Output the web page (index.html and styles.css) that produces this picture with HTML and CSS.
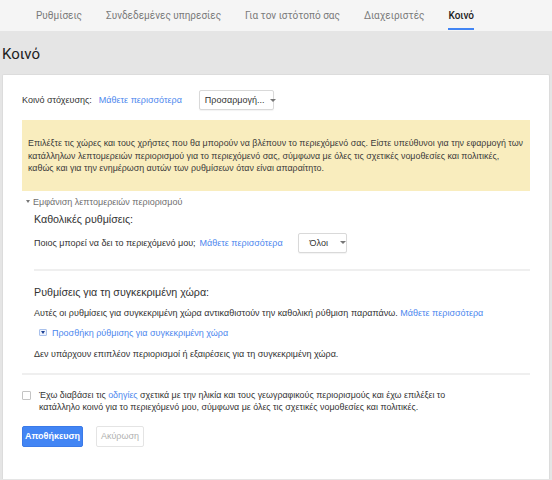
FILE: index.html
```html
<!DOCTYPE html>
<html lang="el">
<head>
<meta charset="utf-8">
<title>Κοινό</title>
<link rel="stylesheet" href="styles.css">
</head>
<body>
<nav class="tabs">
  <a class="tab">Ρυθμίσεις</a>
  <a class="tab">Συνδεδεμένες υπηρεσίες</a>
  <a class="tab">Για τον ιστότοπό σας</a>
  <a class="tab">Διαχειριστές</a>
  <a class="tab active">Κοινό</a>
</nav>
<main class="main">
  <h1 class="title">Κοινό</h1>
  <section class="card">
    <div class="row target-row">
      <span class="label">Κοινό στόχευσης:</span>
      <a class="link">Μάθετε περισσότερα</a>
      <button class="dropdown dd-custom"><span class="dd-text">Προσαρμογή...</span><span class="caret"></span></button>
    </div>
    <div class="notice">Επιλέξτε τις χώρες και τους χρήστες που θα μπορούν να βλέπουν το περιεχόμενό σας. Είστε υπεύθυνοι για την εφαρμογή των<br>κατάλληλων λεπτομερειών περιορισμού για το περιεχόμενό σας, σύμφωνα με όλες τις σχετικές νομοθεσίες και πολιτικές,<br>καθώς και για την ενημέρωση αυτών των ρυθμίσεων όταν είναι απαραίτητο.</div>
    <div class="toggle"><span class="toggle-caret"></span>Εμφάνιση λεπτομερειών περιορισμού</div>
    <div class="details">
      <h2 class="subhead">Καθολικές ρυθμίσεις:</h2>
      <div class="row who-row">
        <span class="label">Ποιος μπορεί να δει το περιεχόμενό μου;</span>
        <a class="link">Μάθετε περισσότερα</a>
        <button class="dropdown dd-all"><span class="dd-text">Όλοι</span><span class="caret"></span></button>
      </div>
      <hr class="sep">
      <h2 class="subhead subhead-country">Ρυθμίσεις για τη συγκεκριμένη χώρα:</h2>
      <p class="text text-override">Αυτές οι ρυθμίσεις για συγκεκριμένη χώρα αντικαθιστούν την καθολική ρύθμιση παραπάνω. <a class="link">Μάθετε περισσότερα</a></p>
      <a class="add-link"><span class="add-icon"><span class="add-caret"></span></span>Προσθήκη ρύθμισης για συγκεκριμένη χώρα</a>
      <p class="text text-none">Δεν υπάρχουν επιπλέον περιορισμοί ή εξαιρέσεις για τη συγκεκριμένη χώρα.</p>
    </div>
    <hr class="sep sep-full">
    <label class="agree">
      <span class="checkbox"></span>
      <span class="agree-text">Έχω διαβάσει τις <a class="link">οδηγίες</a> σχετικά με την ηλικία και τους γεωγραφικούς περιορισμούς και έχω επιλέξει το<br>κατάλληλο κοινό για το περιεχόμενό μου, σύμφωνα με όλες τις σχετικές νομοθεσίες και πολιτικές.</span>
    </label>
    <div class="actions">
      <button class="btn btn-primary">Αποθήκευση</button>
      <button class="btn btn-cancel">Ακύρωση</button>
    </div>
  </section>
</main>
</body>
</html>
```

FILE: styles.css
```css
* { box-sizing: border-box; }

html, body {
  margin: 0;
  padding: 0;
}

body {
  background: #e5e5e5;
  font-family: "Liberation Sans", Arial, sans-serif;
  font-size: 9px;
  color: #333;
  width: 552px;
  height: 480px;
  overflow: hidden;
}

.tabs {
  display: flex;
  gap: 24px;
  height: 31px;
  padding-left: 36px;
  background: #f5f5f5;
}

.tab {
  display: block;
  height: 30px;
  padding-top: 10px;
  font-family: Roboto, "Liberation Sans", sans-serif;
  font-size: 10px;
  line-height: 12px;
  color: #7a7a7a;
  border-bottom: 2px solid transparent;
}

.tab.active {
  color: #222;
  font-weight: 500;
  border-bottom-color: #4285f4;
}

.main {
  padding: 0 2px;
}

.title {
  margin: 0;
  padding-top: 14px;
  height: 43px;
  font-family: Roboto, "Liberation Sans", sans-serif;
  font-weight: 400;
  font-size: 15px;
  line-height: 18px;
  color: #212121;
}

.card {
  background: #fff;
  border: 1px solid #dcdcdc;
  border-bottom: none;
  border-radius: 2px 2px 0 0;
  padding: 15px 19px 32px;
}

.row {
  display: flex;
  align-items: center;
  height: 20px;
}

.label { color: #333; }

.link {
  color: #4d87ee;
  text-decoration: none;
}

.target-row .link { margin-left: 7px; }
.target-row .dropdown { margin-left: 17px; }

.who-row { margin-top: 7px; }
.who-row .link { margin-left: 4px; }
.who-row .dropdown { margin-left: 15px; }

.dropdown {
  display: flex;
  align-items: center;
  height: 20px;
  padding: 0 5px;
  background: #fff;
  border: 1px solid #d9d9d9;
  border-radius: 2px;
  box-shadow: 0 1px 1px rgba(0,0,0,0.05);
  font-family: "Liberation Sans", Arial, sans-serif;
  font-size: 9px;
  color: #333;
}

.dd-custom { width: 75px; }
.dd-custom .caret { margin-left: 5px; }

.dd-all { width: 49px; padding-left: 11px; }
.dd-all .caret { margin-left: 12px; }

.caret {
  width: 0;
  height: 0;
  border-left: 3px solid transparent;
  border-right: 3px solid transparent;
  border-top: 3px solid #777;
}

.notice {
  margin-top: 10px;
  padding: 17px 0 16px 6px;
  background: #f9edbe;
  font-size: 8.9px;
  line-height: 12.5px;
  white-space: nowrap;
  color: #3a3a3a;
}

.toggle {
  display: flex;
  align-items: center;
  margin-top: 5px;
  padding-left: 4px;
  line-height: 12px;
  color: #6f6f6f;
}

.toggle-caret {
  width: 0;
  height: 0;
  margin-right: 3px;
  border-left: 2.5px solid transparent;
  border-right: 2.5px solid transparent;
  border-top: 3px solid #777;
}

.details {
  padding-left: 12px;
}

.subhead {
  margin: 4px 0 0;
  font-weight: 400;
  font-size: 10.7px;
  line-height: 14px;
  color: #333;
}

.subhead-country { margin-top: 14px; }

.sep {
  margin: 16px 0 0;
  height: 2px;
  border: none;
  background: #efefef;
}

.sep-full { margin-top: 13px; }

.text {
  margin: 0;
  line-height: 12px;
}

.text-override { margin-top: 8px; }
.text-none { margin-top: 9px; }

.add-link {
  display: flex;
  align-items: center;
  margin-top: 8px;
  padding-left: 5px;
  line-height: 12px;
  color: #4d87ee;
}

.add-icon {
  display: flex;
  align-items: center;
  justify-content: center;
  width: 8px;
  height: 7px;
  margin-right: 5px;
  background: #eef3fd;
  border: 1px solid #a9c1ec;
  border-radius: 1px;
}

.add-caret {
  width: 0;
  height: 0;
  border-left: 2.5px solid transparent;
  border-right: 2.5px solid transparent;
  border-top: 3px solid #1b3f94;
}

.agree {
  display: flex;
  align-items: flex-start;
  margin-top: 14px;
  font-size: 8.9px;
  line-height: 12px;
  color: #333;
  white-space: nowrap;
}

.checkbox {
  flex: none;
  width: 9px;
  height: 9px;
  margin-top: 2px;
  margin-right: 8px;
  border: 1px solid #c4c4c4;
  border-radius: 1px;
  background: #fff;
}

.actions {
  display: flex;
  gap: 13px;
  margin-top: 13px;
}

.btn {
  height: 21px;
  padding: 0;
  border-radius: 2px;
  font-family: "Liberation Sans", Arial, sans-serif;
  font-size: 9px;
}

.btn-primary {
  width: 61px;
  background: #4285f4;
  border: 1px solid #3b7ae8;
  color: #fff;
  font-weight: bold;
}

.btn-cancel {
  width: 48px;
  background: #fff;
  border: 1px solid #e4e4e4;
  color: #b0b0b0;
}
```
